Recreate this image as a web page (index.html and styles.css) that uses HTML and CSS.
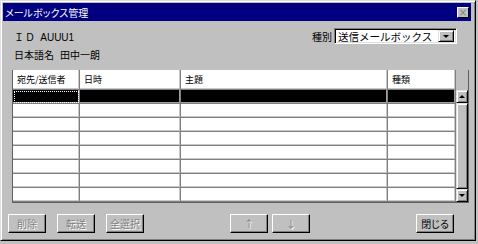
FILE: index.html
```html
<!DOCTYPE html>
<html lang="ja">
<head>
    <meta charset="UTF-8">
    <title>メールボックス管理</title>
    <link rel="stylesheet" href="styles.css">
</head>
<body>
    <div class="window">
        <div class="titlebar">
            <span class="title">メールボックス管理</span>
            <span class="close-btn">×</span>
        </div>

        <div class="content">
            <div class="info-row">
                <div class="field">
                    <span class="label id-label">ＩＤ</span>
                    <span class="value">AUUU1</span>
                </div>
                <div class="kind">
                    <span class="label">種別</span>
                    <div class="combo">
                        <span class="combo-text">送信メールボックス</span>
                        <span class="combo-btn"><span class="arrow-down"></span></span>
                    </div>
                </div>
            </div>

            <div class="name-row"><span>日本語名</span><span class="name">田中一朗</span></div>

            <!-- メール一覧 -->
            <div class="grid">
                <div class="cell head">宛先/送信者</div>
                <div class="cell head">日時</div>
                <div class="cell head">主題</div>
                <div class="cell head">種類</div>
                <div class="corner"></div>
                <div class="scrollbar">
                    <div class="sb-btn"><span class="arrow-up"></span></div>
                    <div class="sb-thumb"></div>
                    <div class="sb-btn"><span class="arrow-down"></span></div>
                </div>

                <div class="cell sel focus"></div><div class="cell sel"></div><div class="cell sel"></div><div class="cell sel"></div>
                <div class="cell"></div><div class="cell"></div><div class="cell"></div><div class="cell"></div>
                <div class="cell"></div><div class="cell"></div><div class="cell"></div><div class="cell"></div>
                <div class="cell"></div><div class="cell"></div><div class="cell"></div><div class="cell"></div>
                <div class="cell"></div><div class="cell"></div><div class="cell"></div><div class="cell"></div>
                <div class="cell"></div><div class="cell"></div><div class="cell"></div><div class="cell"></div>
                <div class="cell"></div><div class="cell"></div><div class="cell"></div><div class="cell"></div>
                <div class="cell"></div><div class="cell"></div><div class="cell"></div><div class="cell"></div>
            </div>

            <div class="buttons">
                <button class="btn" disabled>削除</button>
                <button class="btn gap-s" disabled>転送</button>
                <button class="btn gap-s" disabled>全選択</button>
                <button class="btn gap-l" disabled>↑</button>
                <button class="btn gap-xs" disabled>↓</button>
                <button class="btn gap-xl">閉じる</button>
            </div>
        </div>
    </div>
</body>
</html>
```

FILE: styles.css
```css
body {
    margin: 0;
    background: #c0c0c0;
    font-family: "Noto Sans CJK JP", "Liberation Sans", sans-serif;
    font-size: 10px;
    font-feature-settings: "palt";
    color: #000;
}

.window {
    width: 476px;
    height: 241px;
    box-sizing: border-box;
    border: 1px solid;
    border-color: #dfdfdf #000 #000 #dfdfdf;
    box-shadow: inset 1px 1px 0 #fff, inset -1px -1px 0 #808080;
    padding: 2px;
    background: #c0c0c0;
}

.titlebar {
    height: 18px;
    margin-right: 2px;
    background: #000080;
    color: #fff;
    display: flex;
    align-items: center;
    justify-content: space-between;
    padding: 0 2px;
}

.close-btn {
    width: 10px;
    height: 9px;
    background: #c0c0c0;
    border: 1px solid;
    border-color: #fff #000 #000 #fff;
    color: #808080;
    font-family: "DejaVu Sans", sans-serif;
    font-size: 10px;
    line-height: 9px;
    text-align: center;
}

.content {
    display: flex;
    flex-direction: column;
}

.info-row {
    width: 443px;
    margin: 7px 0 0 11px;
    display: flex;
    justify-content: space-between;
    align-items: center;
}

.id-label {
    font-feature-settings: normal;
    letter-spacing: 1px;
}

.field .value {
    margin-left: 2px;
    font-family: "Liberation Sans", sans-serif;
    font-size: 10px;
}

.kind {
    display: flex;
    align-items: center;
    gap: 2px;
}

.combo {
    width: 123px;
    height: 16px;
    box-sizing: border-box;
    border: 1px solid;
    border-color: #808080 #fff #fff #808080;
    box-shadow: inset 1px 1px 0 #000, inset -1px -1px 0 #dfdfdf;
    background: #fff;
    display: flex;
    align-items: center;
    justify-content: space-between;
    padding: 2px;
}

.combo-text {
    padding-left: 1px;
    font-size: 10.5px;
    font-feature-settings: normal;
}

.combo-btn {
    width: 16px;
    height: 12px;
    box-sizing: border-box;
    background: #c0c0c0;
    border: 1px solid;
    border-color: #dfdfdf #000 #000 #dfdfdf;
    box-shadow: inset 1px 1px 0 #fff, inset -1px -1px 0 #808080;
    display: flex;
    align-items: center;
    justify-content: center;
}

.arrow-down {
    width: 0;
    height: 0;
    border-left: 3px solid transparent;
    border-right: 3px solid transparent;
    border-top: 3px solid #000;
}

.arrow-up {
    width: 0;
    height: 0;
    border-left: 3px solid transparent;
    border-right: 3px solid transparent;
    border-bottom: 3px solid #000;
}

.name-row {
    margin: 5px 0 0 11px;
    height: 12px;
    line-height: 12px;
}

.name-row .name {
    margin-left: 6px;
}

.grid {
    margin: 9px 0 0 9px;
    width: 457px;
    box-sizing: border-box;
    border: 1px solid #606060;
    border-top: 0;
    display: grid;
    grid-template-columns: 67px 101px 207px 68px 12px;
    grid-template-rows: 20px repeat(8, 14px);
}

.cell {
    background: #fff;
    border-right: 1px solid #808080;
    border-bottom: 1px solid #808080;
    box-shadow: inset -1px -1px 0 #c8c8c8;
}

.cell.head {
    font-size: 9px;
    line-height: 19px;
    padding-left: 4px;
    white-space: nowrap;
}

.cell.sel {
    background: #000;
    box-shadow: inset -1px -1px 0 #a0a0a0;
}

.cell.focus {
    outline: 1px dotted #fff;
    outline-offset: -2px;
}

.scrollbar {
    grid-column: 5;
    grid-row: 2 / span 8;
    display: flex;
    flex-direction: column;
}

.sb-btn,
.sb-thumb {
    box-sizing: border-box;
    background: #c0c0c0;
    border: 1px solid;
    border-color: #dfdfdf #000 #000 #dfdfdf;
    box-shadow: inset 1px 1px 0 #fff, inset -1px -1px 0 #808080;
}

.sb-btn {
    height: 13px;
    display: flex;
    align-items: center;
    justify-content: center;
}

.sb-thumb {
    flex: 1;
}

.buttons {
    margin: 11px 0 0 5px;
    display: flex;
}

.btn {
    width: 38px;
    height: 19px;
    box-sizing: border-box;
    padding: 0;
    background: #c0c0c0;
    border: 1px solid;
    border-color: #fff #000 #000 #fff;
    box-shadow: inset -1px -1px 0 #808080;
    font-family: inherit;
    font-size: 10px;
    font-feature-settings: "palt";
    color: #000;
}

.btn:disabled {
    color: #808080;
    text-shadow: 1px 1px 0 #fff;
}

.gap-xs { margin-left: 4px; }
.gap-s { margin-left: 11px; }
.gap-l { margin-left: 86px; }
.gap-xl { margin-left: 106px; }
```
